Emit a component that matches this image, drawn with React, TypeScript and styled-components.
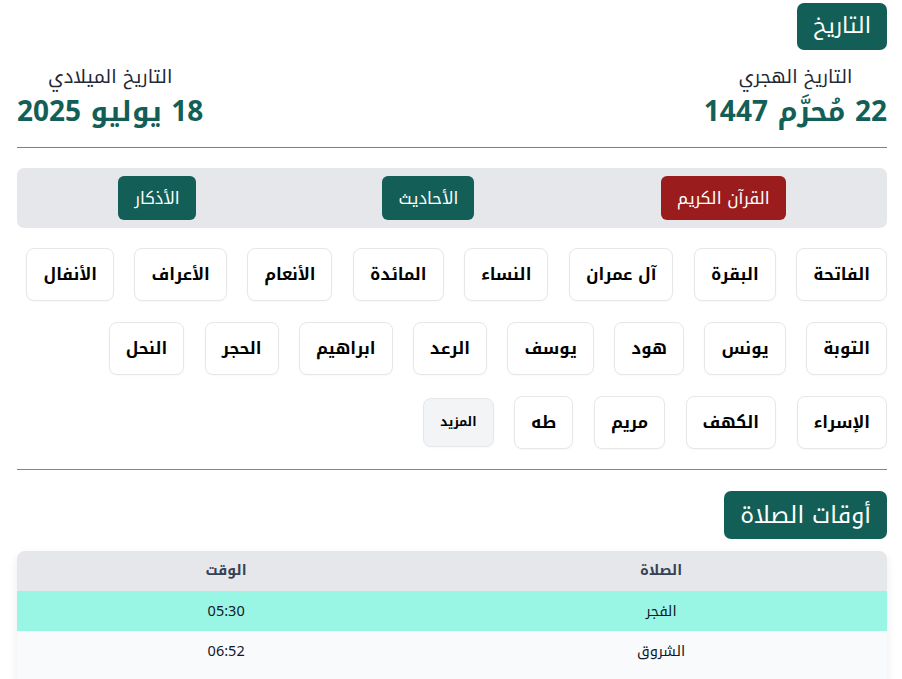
import React from "react";
import styled, { createGlobalStyle } from "styled-components";

const GlobalStyle = createGlobalStyle`
  * { box-sizing: border-box; }
  html, body { margin: 0; padding: 0; background: #ffffff; }
  body {
    font-family: "Noto Kufi Arabic", "Noto Sans", sans-serif;
    color: #111827;
  }
`;

const Page = styled.main`
  direction: rtl;
  padding: 3px 15px 0 17px;
  width: 902px;
`;

const Section = styled.section`
  display: flex;
  flex-direction: column;
`;

const Badge = styled.h2<{ $size: number; $h: number }>`
  align-self: flex-start;
  margin: 0;
  background: #135f57;
  color: #ffffff;
  font-weight: 400;
  font-size: ${(p) => p.$size}px;
  height: ${(p) => p.$h}px;
  line-height: ${(p) => p.$h}px;
  padding: 0 16px;
  border-radius: 7px;
`;

const DatesRow = styled.div`
  display: flex;
  justify-content: space-between;
  align-items: flex-start;
  margin-top: 12px;
  padding-bottom: 15px;
  border-bottom: 1px solid #2aa596;
`;

const DateBlock = styled.div`
  display: flex;
  flex-direction: column;
  align-items: center;
  text-align: center;
`;

const DateLabel = styled.div<{ $size: number }>`
  font-size: ${(p) => p.$size}px;
  line-height: 30px;
  color: #1f2937;
`;

const DateValue = styled.div`
  font-size: 28px;
  font-weight: 700;
  line-height: 40px;
  color: #135f57;
`;

const TabBar = styled.nav`
  margin-top: 20px;
  background: #e5e7eb;
  border-radius: 7px;
  padding: 8px;
  display: flex;
  justify-content: space-around;
  align-items: center;
`;

const TabButton = styled.button<{ $active?: boolean }>`
  font-family: inherit;
  border: none;
  border-radius: 6px;
  background: ${(p) => (p.$active ? "#9b1c1c" : "#135f57")};
  color: #ffffff;
  font-size: 16.8px;
  line-height: 28px;
  padding: 8px 16px;
  cursor: pointer;
`;

const SurahGrid = styled.div`
  display: flex;
  flex-wrap: wrap;
  align-items: center;
  gap: 21px 20.5px;
  padding: 20px 0 20px;
  border-bottom: 1px solid #14b8a6;
`;

const SurahButton = styled.button<{ $more?: boolean }>`
  font-family: inherit;
  background: ${(p) => (p.$more ? "#f3f4f6" : "#ffffff")};
  border: 1px solid #e5e7eb;
  border-radius: 8px;
  color: #000000;
  font-weight: 700;
  font-size: ${(p) => (p.$more ? "12.5px" : "16.5px")};
  line-height: ${(p) => (p.$more ? "23px" : "27px")};
  padding: 12px 16px;
  box-shadow: 0 1px 2px rgba(0, 0, 0, 0.03);
  cursor: pointer;
`;

const PrayerSection = styled.section`
  display: flex;
  flex-direction: column;
  margin-top: 21px;
`;

const TableCard = styled.div`
  margin-top: 12px;
  border-radius: 8px;
  overflow: hidden;
  box-shadow: 0 4px 10px rgba(0, 0, 0, 0.08);
`;

const Table = styled.table`
  width: 100%;
  border-collapse: collapse;
  text-align: center;
`;

const Th = styled.th`
  background: #e5e7eb;
  color: #374151;
  font-size: 14px;
  font-weight: 700;
  line-height: 24px;
  padding: 8px 24px;
`;

const Tr = styled.tr<{ $current?: boolean }>`
  background: ${(p) => (p.$current ? "#99f6e4" : "#f9fafb")};
`;

const Td = styled.td`
  font-size: 14.5px;
  line-height: 24px;
  padding: 8px 24px;
  color: #111827;
`;

const surahs = [
  "الفاتحة", "البقرة", "آل عمران", "النساء", "المائدة", "الأنعام", "الأعراف", "الأنفال",
  "التوبة", "يونس", "هود", "يوسف", "الرعد", "ابراهيم", "الحجر", "النحل",
  "الإسراء", "الكهف", "مريم", "طه",
];

const prayers = [
  { name: "الفجر", time: "05:30", current: true },
  { name: "الشروق", time: "06:52" },
  { name: "الظهر", time: "12:45" },
  { name: "العصر", time: "16:20" },
  { name: "المغرب", time: "19:40" },
  { name: "العشاء", time: "21:05" },
];

export default function App() {
  return (
    <>
      <GlobalStyle />
      <Page>
        <Section>
          <Badge $size={22} $h={47}>التاريخ</Badge>
          <DatesRow>
            <DateBlock>
              <DateLabel $size={18.5}>التاريخ الهجري</DateLabel>
              <DateValue>22 مُحرَّم 1447</DateValue>
            </DateBlock>
            <DateBlock>
              <DateLabel $size={18.8}>التاريخ الميلادي</DateLabel>
              <DateValue>18 يوليو 2025</DateValue>
            </DateBlock>
          </DatesRow>
          <TabBar>
            <TabButton $active>القرآن الكريم</TabButton>
            <TabButton>الأحاديث</TabButton>
            <TabButton>الأذكار</TabButton>
          </TabBar>
          <SurahGrid>
            {surahs.map((s) => (
              <SurahButton key={s}>{s}</SurahButton>
            ))}
            <SurahButton $more>المزيد</SurahButton>
          </SurahGrid>
        </Section>
        <PrayerSection>
          <Badge $size={23.3} $h={48}>أوقات الصلاة</Badge>
          <TableCard>
            <Table>
              <thead>
                <tr>
                  <Th>الصلاة</Th>
                  <Th>الوقت</Th>
                </tr>
              </thead>
              <tbody>
                {prayers.map((p) => (
                  <Tr key={p.name} $current={p.current}>
                    <Td>{p.name}</Td>
                    <Td>{p.time}</Td>
                  </Tr>
                ))}
              </tbody>
            </Table>
          </TableCard>
        </PrayerSection>
      </Page>
    </>
  );
}
